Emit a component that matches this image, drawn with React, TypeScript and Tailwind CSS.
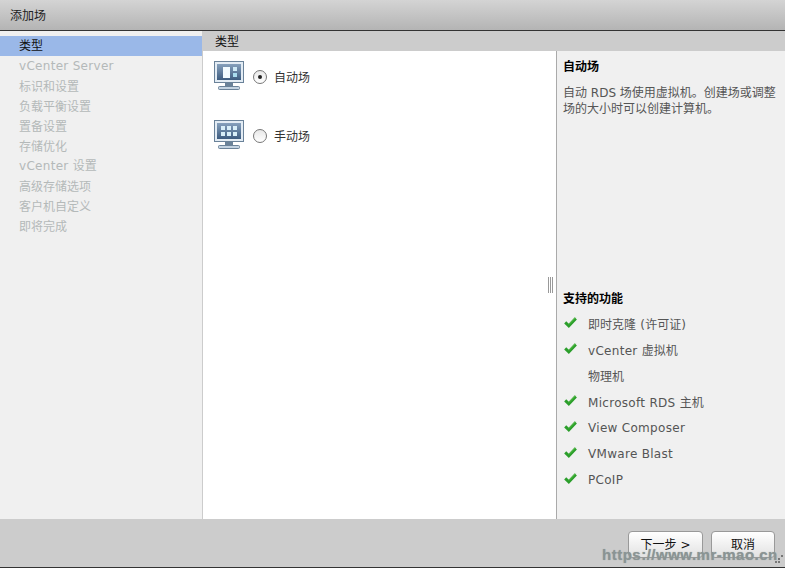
import React from 'react';

const font = { fontFamily: '"DejaVu Sans", "Noto Sans CJK SC", sans-serif' };

const steps = ['类型', 'vCenter Server', '标识和设置', '负载平衡设置', '置备设置', '存储优化', 'vCenter 设置', '高级存储选项', '客户机自定义', '即将完成'];

const features = [
  { label: '即时克隆 (许可证)', on: true },
  { label: 'vCenter 虚拟机', on: true },
  { label: '物理机', on: false },
  { label: 'Microsoft RDS 主机', on: true },
  { label: 'View Composer', on: true },
  { label: 'VMware Blast', on: true },
  { label: 'PCoIP', on: true },
];

// latin runs sit a little wider than DejaVu in the original
const Mixed: React.FC<{ text: string }> = ({ text }) => (
  <>
    {text.split(/([A-Za-z ()]+)/).map((part, i) =>
      i % 2 === 1 ? <span key={i} className="tracking-[0.3px]">{part}</span> : part
    )}
  </>
);

const CheckMark: React.FC = () => (
  <svg width="13" height="11" viewBox="0 0 13 11" className="ml-[1px]">
    <polyline points="1.2,5.4 4.8,8.8 11.8,1.4" fill="none" stroke="#2b9e2b" strokeWidth="3" />
    <polyline points="5,7.4 11.4,0.8" fill="none" stroke="#5cc24a" strokeWidth="1" />
  </svg>
);

const Monitor: React.FC<{ manual?: boolean }> = ({ manual }) => (
  <svg width="31" height="30" viewBox="0 0 31 30" className="shrink-0">
    <defs>
      <linearGradient id={manual ? 'scrM' : 'scrA'} x1="0" y1="0" x2="0" y2="1">
        <stop offset="0" stopColor="#86a0bc" />
        <stop offset="1" stopColor="#3d5c80" />
      </linearGradient>
    </defs>
    <rect x="0.5" y="0.5" width="29" height="21" fill="#e3ecf4" stroke="#6a8299" />
    <rect x="3" y="3" width="24" height="16" fill={`url(#${manual ? 'scrM' : 'scrA'})`} />
    {manual ? (
      <g fill="#d8eef8">
        <rect x="7" y="6" width="4" height="4" />
        <rect x="13" y="6" width="4" height="4" />
        <rect x="19" y="6" width="4" height="4" />
        <rect x="7" y="12" width="4" height="4" />
        <rect x="13" y="12" width="4" height="4" />
        <rect x="19" y="12" width="4" height="4" />
      </g>
    ) : (
      <g>
        <rect x="9" y="6" width="7" height="11" fill="#f2fbff" />
        <rect x="19" y="6" width="4" height="4" fill="#cfeaf6" />
        <rect x="19" y="12" width="4" height="4" fill="#a9dcee" />
      </g>
    )}
    <rect x="11" y="22" width="8" height="4" fill="#6a8299" />
    <rect x="4.5" y="25.5" width="21" height="3" rx="1" fill="#c3d3e2" stroke="#6a8299" />
  </svg>
);

const Radio: React.FC<{ checked?: boolean }> = ({ checked }) => (
  <span className="w-[14px] h-[14px] rounded-full border border-[#777] bg-gradient-to-b from-[#e8e8e8] to-white flex items-center justify-center shrink-0">
    {checked && <span className="w-1 h-1 rounded-full bg-[#222]" />}
  </span>
);

const TypeOption: React.FC<{ label: string; manual?: boolean; checked?: boolean }> = ({ label, manual, checked }) => (
  <div className="flex items-center h-[30px]">
    <Monitor manual={manual} />
    <span className="ml-[8px] mt-[1px]"><Radio checked={checked} /></span>
    <span className="ml-[7px] mt-[3px] text-[12px] text-[#333]">{label}</span>
  </div>
);

const FooterButton: React.FC<{ label: string; width: string }> = ({ label, width }) => (
  <button className={`${width} h-[27px] rounded-[4px] border border-[#999] bg-gradient-to-b from-white to-[#e2e2e2] text-[12px] text-[#111]`}>
    {label}
  </button>
);

export default function App() {
  return (
    <div className="relative w-[785px] h-[568px] flex flex-col overflow-hidden bg-[#cccccc]" style={font}>
      <div className="h-[30px] flex items-center pl-[10px] pt-[2px] text-[12px] text-[#222] bg-gradient-to-b from-[#d4d4d4] to-[#b4b4b4]">
        添加场
      </div>
      <div className="h-[1px] bg-[#333]" />
      <div className="flex flex-1 min-h-0">
        <div className="w-[202px] bg-[#f0f0f0] pt-[5px] shrink-0">
          {steps.map((step, i) => (
            <div key={i} className={`h-[20px] pl-[19px] text-[12px] ${i === 0 ? 'leading-[21px] bg-[#9ab8e8] text-[#111]' : i === 1 || i === 6 ? 'leading-[20px] text-[#b4b9b9]' : 'leading-[22px] text-[#b4b9b9]'}`}>
              <Mixed text={step} />
            </div>
          ))}
        </div>
        <div className="flex-1 flex flex-col ml-[1px]">
          <div className="h-[20px] leading-[22px] pl-[12px] text-[12px] text-[#111] bg-[#cccccc]">类型</div>
          <div className="flex flex-1 min-h-0">
            <div className="relative w-[353px] bg-white pt-[10px] pl-[11px] flex flex-col gap-[29px]">
              <TypeOption label="自动场" checked />
              <TypeOption label="手动场" manual />
              <div className="absolute right-[3px] top-[226px] w-[5px] h-[16px] border-x border-[#999] flex justify-center">
                <div className="w-[1px] bg-[#999]" />
              </div>
            </div>
            <div className="flex-1 border-l border-[#aaaaaa] bg-[#f0f0f0] pl-[6px] flex flex-col">
              <div className="mt-[7px] text-[12px] font-bold text-black leading-[18px]">自动场</div>
              <p className="mt-[9px] w-[216px] text-[12px] leading-[16px] text-[#555]">
                自动 RDS 场使用虚拟机。创建场或调整场的大小时可以创建计算机。
              </p>
              <div className="mt-[173px] text-[12px] font-bold text-black leading-[18px]">支持的功能</div>
              <div className="mt-[4px] flex flex-col">
                {features.map((f, i) => (
                  <div key={i} className="h-[26px] flex items-center">
                    <span className="w-[25px] shrink-0 -mt-[6px]">
                      {f.on && <CheckMark />}
                    </span>
                    <span className={`text-[12px] text-[#555] ${i >= 4 ? '-mt-[2px]' : ''}`}><Mixed text={f.label} /></span>
                  </div>
                ))}
              </div>
            </div>
          </div>
        </div>
      </div>
      <div className="h-[49px] shrink-0 flex justify-end items-start gap-[8px] pt-[12px] pr-[10px] border-b border-[#333]">
        <FooterButton label="下一步 >" width="w-[75px]" />
        <FooterButton label="取消" width="w-[64px]" />
      </div>
      <div className="absolute left-[602px] top-[544px] text-[15px] font-bold text-[#8a9494] tracking-[0.5px] whitespace-nowrap [text-shadow:0_0_1px_#9aa2a2]" style={{ fontFamily: '"Liberation Sans", sans-serif' }}>
        https://www.mr-mao.cn
      </div>
      <div className="absolute right-[2px] bottom-[5px] grid grid-cols-3 gap-[1px]">
        <span className="w-[2px] h-[2px]" />
        <span className="w-[2px] h-[2px]" />
        <span className="w-[2px] h-[2px] bg-[#777]" />
        <span className="w-[2px] h-[2px]" />
        <span className="w-[2px] h-[2px] bg-[#777]" />
        <span className="w-[2px] h-[2px]" />
        <span className="w-[2px] h-[2px] bg-[#777]" />
        <span className="w-[2px] h-[2px] bg-[#777]" />
        <span className="w-[2px] h-[2px]" />
      </div>
    </div>
  );
}
